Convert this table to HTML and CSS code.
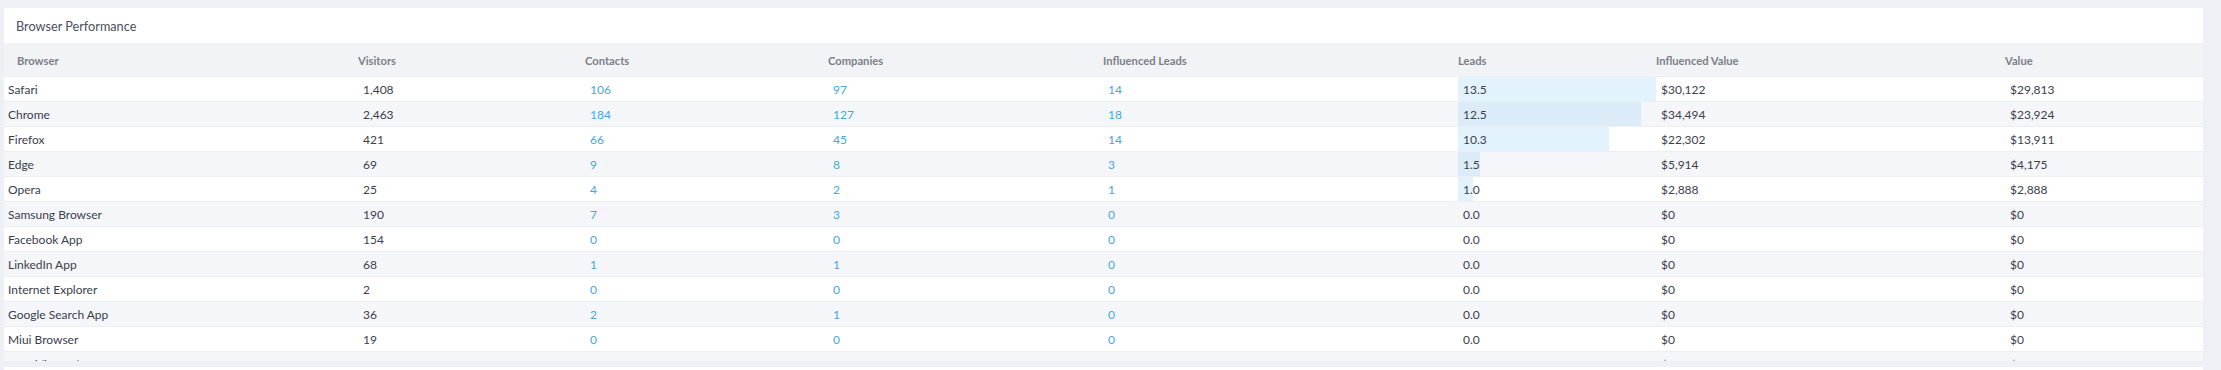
FILE: index.html
```html
<!DOCTYPE html>
<html lang="en">
<head>
<meta charset="utf-8">
<title>Browser Performance</title>
<link rel="stylesheet" href="styles.css">
</head>
<body>
<div class="page">
  <section class="card">
    <div class="card-title">Browser Performance</div>
    <div class="row head">
      <div class="cell first">Browser</div>
      <div class="cell">Visitors</div>
      <div class="cell">Contacts</div>
      <div class="cell">Companies</div>
      <div class="cell">Influenced Leads</div>
      <div class="cell">Leads</div>
      <div class="cell">Influenced Value</div>
      <div class="cell">Value</div>
    </div>
    <div class="rows">
      <div class="row">
        <div class="cell first">Safari</div><div class="cell">1,408</div><div class="cell link">106</div><div class="cell link">97</div><div class="cell link">14</div>
        <div class="cell leads"><span class="bar" style="width:100%"></span><span class="val">13.5</span></div>
        <div class="cell">$30,122</div><div class="cell">$29,813</div>
      </div>
      <div class="row">
        <div class="cell first">Chrome</div><div class="cell">2,463</div><div class="cell link">184</div><div class="cell link">127</div><div class="cell link">18</div>
        <div class="cell leads"><span class="bar" style="width:92.6%"></span><span class="val">12.5</span></div>
        <div class="cell">$34,494</div><div class="cell">$23,924</div>
      </div>
      <div class="row">
        <div class="cell first">Firefox</div><div class="cell">421</div><div class="cell link">66</div><div class="cell link">45</div><div class="cell link">14</div>
        <div class="cell leads"><span class="bar" style="width:76.3%"></span><span class="val">10.3</span></div>
        <div class="cell">$22,302</div><div class="cell">$13,911</div>
      </div>
      <div class="row">
        <div class="cell first">Edge</div><div class="cell">69</div><div class="cell link">9</div><div class="cell link">8</div><div class="cell link">3</div>
        <div class="cell leads"><span class="bar" style="width:11.1%"></span><span class="val">1.5</span></div>
        <div class="cell">$5,914</div><div class="cell">$4,175</div>
      </div>
      <div class="row">
        <div class="cell first">Opera</div><div class="cell">25</div><div class="cell link">4</div><div class="cell link">2</div><div class="cell link">1</div>
        <div class="cell leads"><span class="bar" style="width:7.4%"></span><span class="val">1.0</span></div>
        <div class="cell">$2,888</div><div class="cell">$2,888</div>
      </div>
      <div class="row">
        <div class="cell first">Samsung Browser</div><div class="cell">190</div><div class="cell link">7</div><div class="cell link">3</div><div class="cell link">0</div>
        <div class="cell leads"><span class="val">0.0</span></div>
        <div class="cell">$0</div><div class="cell">$0</div>
      </div>
      <div class="row">
        <div class="cell first">Facebook App</div><div class="cell">154</div><div class="cell link">0</div><div class="cell link">0</div><div class="cell link">0</div>
        <div class="cell leads"><span class="val">0.0</span></div>
        <div class="cell">$0</div><div class="cell">$0</div>
      </div>
      <div class="row">
        <div class="cell first">LinkedIn App</div><div class="cell">68</div><div class="cell link">1</div><div class="cell link">1</div><div class="cell link">0</div>
        <div class="cell leads"><span class="val">0.0</span></div>
        <div class="cell">$0</div><div class="cell">$0</div>
      </div>
      <div class="row">
        <div class="cell first">Internet Explorer</div><div class="cell">2</div><div class="cell link">0</div><div class="cell link">0</div><div class="cell link">0</div>
        <div class="cell leads"><span class="val">0.0</span></div>
        <div class="cell">$0</div><div class="cell">$0</div>
      </div>
      <div class="row">
        <div class="cell first">Google Search App</div><div class="cell">36</div><div class="cell link">2</div><div class="cell link">1</div><div class="cell link">0</div>
        <div class="cell leads"><span class="val">0.0</span></div>
        <div class="cell">$0</div><div class="cell">$0</div>
      </div>
      <div class="row">
        <div class="cell first">Miui Browser</div><div class="cell">19</div><div class="cell link">0</div><div class="cell link">0</div><div class="cell link">0</div>
        <div class="cell leads"><span class="val">0.0</span></div>
        <div class="cell">$0</div><div class="cell">$0</div>
      </div>
      <div class="row">
        <div class="cell first">Safari (in-app)</div><div class="cell">262</div><div class="cell link">0</div><div class="cell link">0</div><div class="cell link">0</div>
        <div class="cell leads"><span class="val">0.0</span></div>
        <div class="cell">$0</div><div class="cell">$0</div>
      </div>
    </div>
  </section>
  <section class="card next"></section>
</div>
</body>
</html>
```

FILE: styles.css
```css
* { box-sizing: border-box; }
html, body { margin: 0; padding: 0; }
body {
  background: #edf1f5;
  font-family: Lato, "Open Sans", sans-serif;
  color: #3b404b;
}
.page {
  display: flex;
  flex-direction: column;
  gap: 6px;
  padding: 8px 18px 0 4px;
}
.card {
  background: #fff;
  height: 353px;
  overflow: hidden;
  flex: none;
}
.card.next { height: 3px; }
.card-title {
  height: 35px;
  display: flex;
  align-items: center;
  padding-left: 12px;
  font-size: 12.7px;
  color: #4a505c;
}
.row {
  display: grid;
  grid-template-columns: 354px 227px 243px 275px 355px 198px 349px 1fr;
  height: 25px;
  border-top: 1px solid #eceef2;
  font-size: 12px;
}
.row .cell {
  display: flex;
  align-items: center;
  padding-left: 5px;
  white-space: nowrap;
}
.row .cell.first { padding-left: 4px; }
.row.head {
  height: 33px;
  border-top: 0;
  background: #f1f3f6;
  font-weight: 700;
  font-size: 11.2px;
  color: #7b8089;
}
.row.head .cell { padding-left: 0; padding-top: 2px; }
.row.head .cell.first { padding-left: 13px; }
.rows .row:nth-child(even) { background: #f5f6f9; }
.link { color: #45a6e0; }
.leads { position: relative; }
.leads .bar {
  position: absolute;
  left: 0;
  top: 0;
  bottom: 0;
  background: #e3f3fd;
}
.rows .row:nth-child(even) .leads .bar { background: #dbecf8; }
.leads .val { position: relative; }
```
